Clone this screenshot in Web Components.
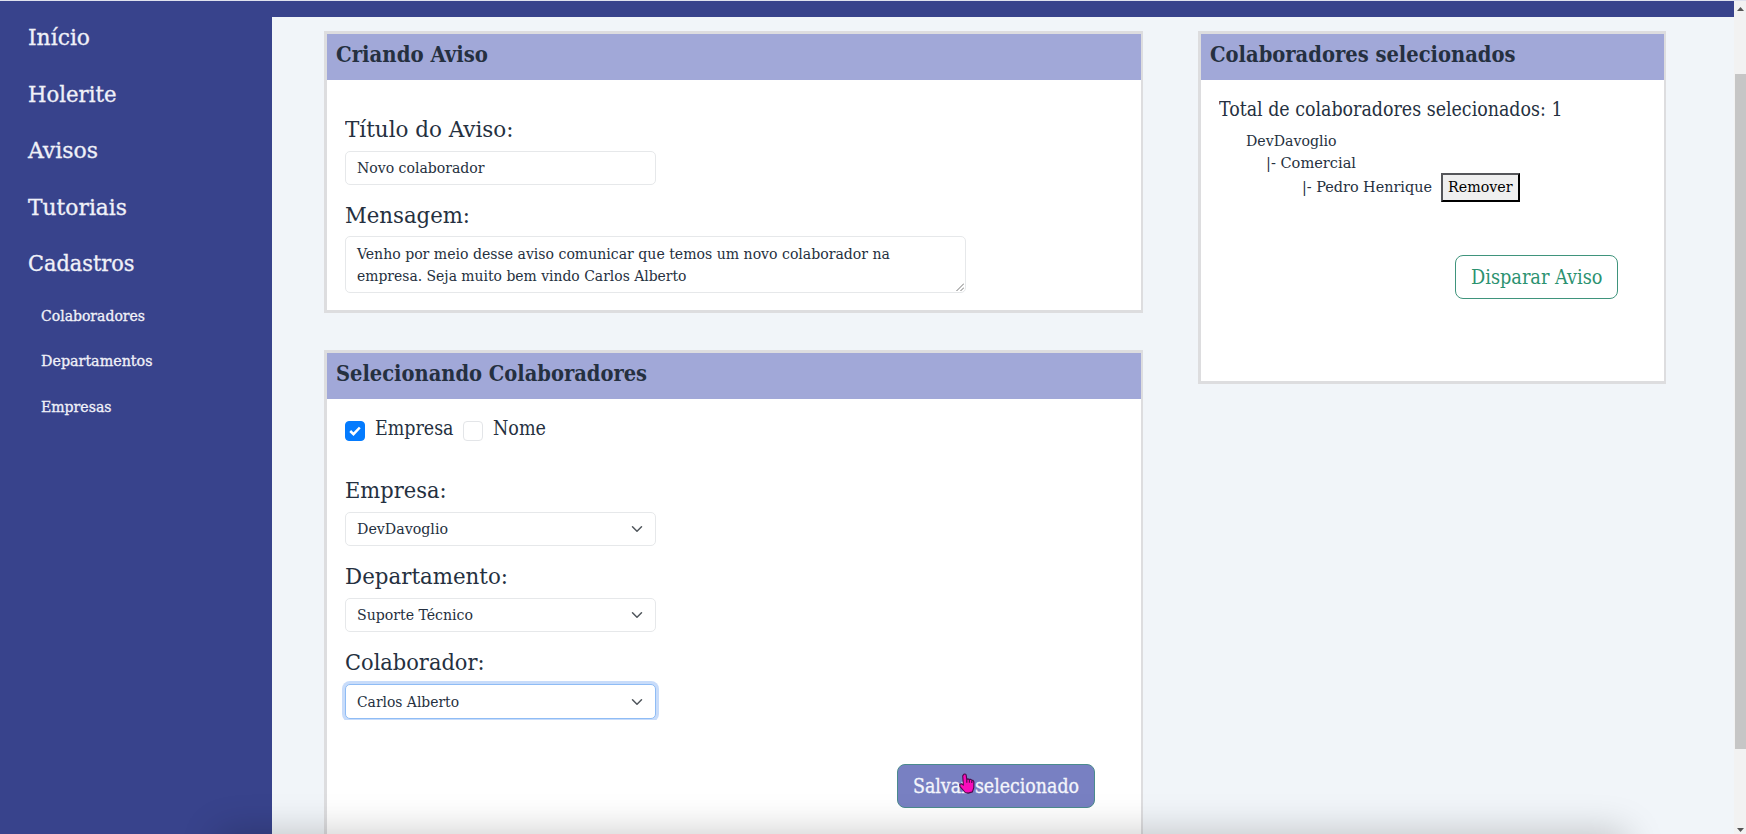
<!DOCTYPE html>
<html lang="pt-BR">
<head>
<meta charset="utf-8">
<title>Avisos</title>
<style>
html,body{margin:0;height:834px;overflow:hidden}
body{font-family:"DejaVu Serif Condensed","DejaVu Serif",serif;color:#253040;background:#f1f5f9}
</style>
</head>
<body>
<aviso-page></aviso-page>
<script>
function define(name, html, init) {
  customElements.define(name, class extends HTMLElement {
    constructor() {
      super();
      this.attachShadow({mode: 'open'}).innerHTML = html;
    }
    connectedCallback() { if (init) init(this, this.shadowRoot); }
  });
}

// One line of text, condensed or widened to the width in "w".
define('fit-text', `<style>
:host{display:block;flex:none;white-space:nowrap;font-size:15.4px;line-height:22px;height:22px}
:host([size=lg]){font-size:22.4px;line-height:28px;height:28px}
:host([size=md]){font-size:20px;line-height:26px;height:26px}
span{display:inline-block;transform-origin:0 50%;vertical-align:top}
</style><span><slot></slot></span>`, (el, root) => {
  const w = parseFloat(el.getAttribute('w'));
  const s = root.querySelector('span');
  s.textContent = el.textContent;
  el.style.width = w + 'px';
  const n = s.getBoundingClientRect().width;
  if (n) s.style.transform = 'scaleX(' + w / n + ')';
});

define('side-nav', `<style>
:host{display:block;box-sizing:border-box;width:271.5px;padding:8px 0 0 27.5px;background:#38438c;color:#f0f1f8;-webkit-text-stroke:.3px #f0f1f8}
div{display:flex;align-items:center;height:56.5px}
div.sub{height:45.5px;padding-left:13.5px;position:relative;top:1.5px}
</style>
<div><fit-text size="lg" w="62">Início</fit-text></div>
<div><fit-text size="lg" w="88.5">Holerite</fit-text></div>
<div><fit-text size="lg" w="70">Avisos</fit-text></div>
<div><fit-text size="lg" w="99">Tutoriais</fit-text></div>
<div><fit-text size="lg" w="106.5">Cadastros</fit-text></div>
<div class="sub"><fit-text w="104">Colaboradores</fit-text></div>
<div class="sub"><fit-text w="111.5">Departamentos</fit-text></div>
<div class="sub"><fit-text w="70.5">Empresas</fit-text></div>`);

define('panel-card', `<style>
:host{display:block;box-sizing:border-box;border:3px solid #dddddf;border-right-width:2.5px;background:#fff}
header{height:46px;box-sizing:border-box;padding:6px 0 0 9px;background:#a1a8d8;font-weight:bold}
section{padding:0 18px}
</style><header><slot name="title"></slot></header><section><slot></slot></section>`);

define('form-field', `<style>
:host{display:block;height:86.4px}
.box{box-sizing:border-box;display:flex;align-items:center;justify-content:space-between;width:311px;height:34.5px;margin-top:8px;padding:0 12px 0 11px;border:1px solid #e6e8ea;border-radius:5px;background:#fff}
:host([area]) .box{position:relative;display:block;width:621px;height:56.5px;padding-top:5.5px;margin-top:7.5px}
:host([focused]){height:71.5px;overflow:hidden;margin:0 -4px;padding:0 4px}
:host([focused]) .box{border-color:#8fbcf5;box-shadow:0 0 0 3px #c8dcfa}
svg{display:none}
:host([select]) .chev{display:block}
:host([area]) .grip{display:block;position:absolute;right:1px;bottom:1px}
</style><slot name="label"></slot><div class="box"><slot></slot>
<svg class="chev" width="12" height="12" viewBox="0 0 16 16" fill="none" stroke="#50565c" stroke-width="2" stroke-linecap="round" stroke-linejoin="round"><path d="m2 5 6 6 6-6"/></svg>
<svg class="grip" width="8" height="8" viewBox="0 0 8 8" stroke="#777" stroke-width="1"><path d="M.5 8 8 .5M4.5 8 8 4.5"/></svg></div>`);

define('check-box', `<style>
:host{display:flex;gap:9.5px}
i{box-sizing:border-box;width:20px;height:20px;margin-top:6px;border:1px solid #e3e5e8;border-radius:4px;display:flex;align-items:center;justify-content:center}
svg{display:none}
:host([checked]) i{background:#047bfe;border-color:#047bfe}
:host([checked]) svg{display:block}
</style><i><svg width="12" height="12" viewBox="0 0 12 12" fill="none" stroke="#fff" stroke-width="2.5"><path d="m1.2 6 3.3 3.2 6.3-6.7"/></svg></i><slot></slot>`);

define('action-button', `<style>
:host{box-sizing:border-box;display:flex;justify-content:center;padding-top:8px;width:163px;height:44px;border:1px solid #3f947c;border-radius:8px;color:#2b9270}
:host([filled]){width:198px;background:#7880c2;border-color:#4b8b8d;color:#f4f5fb;-webkit-text-stroke:.3px #f4f5fb}
:host([plain]){width:79.5px;height:28.5px;padding-top:1px;border:2px outset #000;border-color:#55565a #000 #000 #55565a;border-radius:0;background:#efefef;color:#000}
</style><slot></slot>`);

define('scroll-bar', `<style>
:host{display:flex;flex-direction:column;align-items:center;justify-content:space-between;box-sizing:border-box;width:12.5px;height:833px;background:#f2f2f2;padding:6px 0 2px 1.5px}
i{width:100%;height:675px;flex:none;background:#c6c6c6}
.up{margin-bottom:63px}
svg{display:block;flex:none}
</style><svg class="up" width="7" height="4"><path d="M0 4 3.5 0 7 4z" fill="#555"/></svg><i></i><svg width="7" height="4" style="margin-top:auto"><path d="M0 0h7L3.5 4z" fill="#555"/></svg>`);

define('hand-cursor', `<style>:host{display:block;width:16px;height:21px}svg{display:block}</style>
<svg width="16" height="21" viewBox="0 0 16 21"><path d="M5 1.2c1.2-.6 2 .1 2.2 1.1l.6 4 1.4-.4 1.2.5 1.4-.1 1 .9 1.2.2.9 1.3-.1 6-1.4 4.2-4.2 1.2-3-.6L1 13.6l-.2-2.2 1.6-.6 2 1.3-.7-9.3z" fill="#f90cba" stroke="#4c0a4b" stroke-width="1.1" stroke-linejoin="round"/><path d="M7.8 6.3v3.5M10.4 6.6v3.2M12.8 7.4v2.6" stroke="#4c0a4b" stroke-width="1.1"/></svg>`);

define('aviso-page', `<style>
:host{display:grid;position:relative;grid-template-rows:1px 833px;height:834px;overflow:hidden}
.edge{background:#dfe2ee}
.frame{display:grid;grid-template-columns:271.5px 1fr 12.5px}
.content{border-top:16px solid #38438c;display:flex;gap:55px;padding:14px 0 0 52.5px;height:803px;align-items:flex-start}
.left{display:grid;gap:37px;width:819px;flex:none}
.one{height:282px}.two{height:520px}
.one form-field:first-of-type{margin-top:34.5px}
.checks{display:flex;gap:10px;padding-top:16px;height:26px;margin-bottom:34.5px}
.save{position:relative;width:198px;margin:44.5px 0 0 551.5px}
hand-cursor{position:absolute;left:62.5px;top:9px}
.right{width:468px;height:353px;flex:none}
.total{margin-top:16px}
.tree{padding:7.5px 0 0 27px}
.tree>:nth-child(2){margin-left:20px}
.person{display:flex;gap:8.5px;padding-left:56px;align-items:center;height:28.5px;margin-top:-.5px}
.send{margin:53px 0 0 236px}
.shade{position:absolute;left:225px;top:839px;width:1395px;height:40px;box-shadow:0 0 38px 6px rgba(0,0,0,.22);pointer-events:none}
</style>
<div class="edge"></div>
<div class="frame">
 <side-nav></side-nav>
 <div class="content">
  <div class="left">
   <panel-card class="one"><fit-text slot="title" size="lg" w="152">Criando Aviso</fit-text>
    <form-field><fit-text slot="label" size="lg" w="168.5">Título do Aviso:</fit-text><fit-text w="127.5">Novo colaborador</fit-text></form-field>
    <form-field area><fit-text slot="label" size="lg" w="125">Mensagem:</fit-text><fit-text w="533">Venho por meio desse aviso comunicar que temos um novo colaborador na</fit-text><fit-text w="329.5">empresa. Seja muito bem vindo Carlos Alberto</fit-text></form-field>
   </panel-card>
   <panel-card class="two"><fit-text slot="title" size="lg" w="311">Selecionando Colaboradores</fit-text>
    <div class="checks"><check-box checked><fit-text size="md" w="78.5">Empresa</fit-text></check-box><check-box><fit-text size="md" w="53">Nome</fit-text></check-box></div>
    <form-field select><fit-text slot="label" size="lg" w="101.5">Empresa:</fit-text><fit-text w="91">DevDavoglio</fit-text></form-field>
    <form-field select><fit-text slot="label" size="lg" w="163">Departamento:</fit-text><fit-text w="116">Suporte Técnico</fit-text></form-field>
    <form-field select focused><fit-text slot="label" size="lg" w="139.5">Colaborador:</fit-text><fit-text w="102">Carlos Alberto</fit-text></form-field>
    <div class="save"><action-button filled><fit-text size="md" w="166">Salvar selecionado</fit-text></action-button><hand-cursor></hand-cursor></div>
   </panel-card>
  </div>
  <panel-card class="right"><fit-text slot="title" size="lg" w="305.5">Colaboradores selecionados</fit-text>
   <fit-text class="total" size="md" w="343.5">Total de colaboradores selecionados: 1</fit-text>
   <div class="tree"><fit-text w="90.5">DevDavoglio</fit-text><fit-text w="90">|- Comercial</fit-text>
    <div class="person"><fit-text w="130">|- Pedro Henrique</fit-text><action-button plain><fit-text w="64.5">Remover</fit-text></action-button></div></div>
   <action-button class="send"><fit-text size="md" w="131.5">Disparar Aviso</fit-text></action-button>
  </panel-card>
 </div>
 <scroll-bar></scroll-bar>
</div>
<div class="shade"></div>`);
</script>
</body>
</html>
